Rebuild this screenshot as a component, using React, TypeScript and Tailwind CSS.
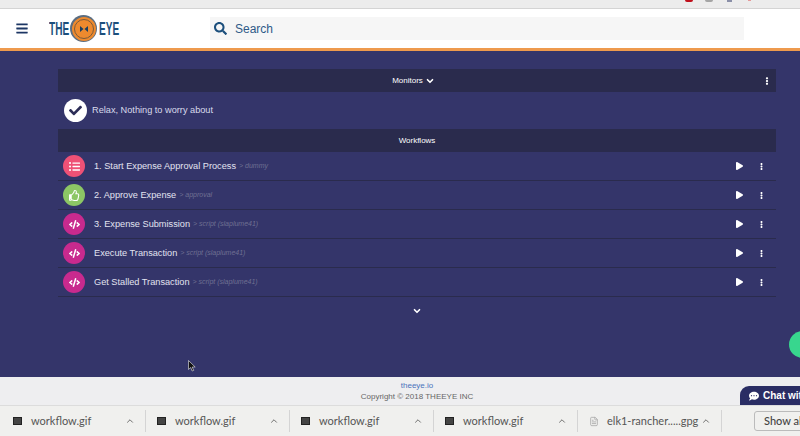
import { ChevronDown, ChevronUp, FileText } from "lucide-react";
import { FaBars, FaCheck, FaCode, FaCommentDots, FaEllipsisV, FaListUl, FaPlay, FaRegThumbsUp, FaSearch } from "react-icons/fa";

const workflows = [
  { name: "1. Start Expense Approval Process", meta: "> dummy", color: "bg-[#ee5176]", icon: "list" },
  { name: "2. Approve Expense", meta: "> approval", color: "bg-[#8cc665]", icon: "thumb" },
  { name: "3. Expense Submission", meta: "> script (slaplume41)", color: "bg-[#c82a8e]", icon: "code" },
  { name: "Execute Transaction", meta: "> script (slaplume41)", color: "bg-[#c82a8e]", icon: "code" },
  { name: "Get Stalled Transaction", meta: "> script (slaplume41)", color: "bg-[#c82a8e]", icon: "code" },
];

const downloads = ["workflow.gif", "workflow.gif", "workflow.gif", "workflow.gif"];

const WorkflowIcon = ({ icon }: { icon: string }) => {
  if (icon === "list") return <FaListUl className="h-[11px] w-[11px] text-white" />;
  if (icon === "thumb") return <FaRegThumbsUp className="h-[11px] w-[11px] text-white" />;
  return <FaCode className="h-[11px] w-[11px] text-white" />;
};

const Logo = () => (
  <div className="flex items-center text-[19px] font-bold leading-none text-[#1c4f7c]">
    <span className="inline-block w-[21px] origin-left scale-x-[0.53]">THE</span>
    <div className="flex h-[27px] w-[27px] items-center justify-center rounded-full bg-[#5b6d80]">
      <div className="flex h-[24px] w-[24px] items-center justify-center rounded-full bg-[#ee8a2e]">
        <div className="flex h-[20px] w-[20px] items-center justify-center rounded-full border border-[#7a5a3a]">
          <svg width="8" height="6" viewBox="0 0 8 6">
            <path d="M0 0l3.5 3L0 6zM8 0L4.5 3 8 6z" fill="#1c3f5f" />
          </svg>
        </div>
      </div>
    </div>
    <span className="ml-[2px] inline-block w-[20px] origin-left scale-x-[0.53]">EYE</span>
  </div>
);

const App = () => {
  return (
    <div className="relative flex h-[436px] w-[800px] flex-col overflow-hidden bg-[#34356a] font-['Liberation_Sans',sans-serif]">
      <div className="relative h-[9px] shrink-0 border-b border-[#d4d4d4] bg-[#ececec]">
        <span className="absolute left-[685px] top-0 h-[2px] w-[8px] rounded-b-full bg-[#c0101c]" />
        <span className="absolute left-[705px] top-0 h-[2px] w-[8px] rounded-b-full bg-[#a5a5a5]" />
        <span className="absolute left-[727px] top-0 h-[2px] w-[5px] bg-[#8a8fa8]" />
        <span className="absolute left-[748px] top-0 h-[1px] w-[3px] bg-[#e59a9a]" />
      </div>

      <header className="flex h-[42px] shrink-0 items-center border-b-[3px] border-[#ee9a4d] bg-white pl-[16px]">
        <FaBars className="h-[13px] w-[12px] text-[#1c3664]" />
        <div className="ml-[21px] w-[161px]">
          <Logo />
        </div>
        <div className="flex h-[23px] w-[534px] items-center bg-[#f6f6f6] pl-[4px]">
          <FaSearch className="h-[13px] w-[13px] text-[#1c4f7c]" />
          <span className="ml-[8px] text-[12px] text-[#2f5a88]">Search</span>
        </div>
      </header>

      <main className="flex-1 pl-[58px] pr-[24px] pt-[18px]">
        <div className="relative flex h-[23px] items-center justify-center bg-[#2a2b4d] pr-[7px] text-[8px] text-white">
          <span>Monitors</span>
          <ChevronDown className="ml-[2px] h-[10px] w-[10px]" strokeWidth={4} />
          <FaEllipsisV className="absolute right-[5px] h-[8px] w-[8px]" />
        </div>

        <div className="flex h-[37px] items-center pl-[6px]">
          <div className="flex h-[23px] w-[23px] items-center justify-center rounded-full bg-white">
            <FaCheck className="h-[13px] w-[13px] text-[#2c2d57]" />
          </div>
          <span className="ml-[5px] text-[9.2px] text-[#d9dbec]">Relax, Nothing to worry about</span>
        </div>

        <div className="flex h-[23px] items-center justify-center bg-[#2a2b4d] text-[8px] text-white">Workflows</div>

        {workflows.map((item) => (
          <div key={item.name} className="flex h-[29px] items-center border-b border-[#2a2b4d] pl-[5px]">
            <div className={`flex h-[22px] w-[22px] items-center justify-center rounded-full ${item.color}`}>
              <WorkflowIcon icon={item.icon} />
            </div>
            <span className="ml-[9px] mt-px text-[9.2px] text-[#e2e3f0]">{item.name}</span>
            <span className="ml-[3px] mt-px text-[7px] italic text-[#6f7092]">{item.meta}</span>
            <FaPlay className="ml-auto h-[8px] w-[7px] text-white" />
            <FaEllipsisV className="ml-[15px] mr-[11px] h-[7px] w-[7px] text-white" />
          </div>
        ))}

        <div className="flex justify-center pt-[9px]">
          <ChevronDown className="h-[10px] w-[10px] text-white" strokeWidth={4} />
        </div>
      </main>

      <footer className="flex h-[28px] shrink-0 flex-col items-center justify-center bg-[#eeeef0] pl-[34px] text-[8px] leading-[11px]">
        <span className="text-[#4a73bd]">theeye.io</span>
        <span className="text-[#666]">Copyright © 2018 THEEYE INC</span>
      </footer>

      <div className="flex h-[31px] shrink-0 items-center border-t border-[#dcdcdc] bg-[#f0f0ee] pl-[2px] font-['Lato',sans-serif] text-[11px] text-[#555]">
        {downloads.map((name, i) => (
          <div key={i} className="flex h-[22px] w-[144px] shrink-0 items-center border-r border-[#d4d4d4] pl-[11px] pr-[10px]">
            <span className="h-[8px] w-[9px] border border-[#222] bg-[#444]" />
            <span className="ml-[9px]">{name}</span>
            <ChevronUp className="ml-auto h-[10px] w-[10px]" />
          </div>
        ))}
        <div className="flex h-[22px] w-[144px] shrink-0 items-center border-r border-[#d4d4d4] pl-[11px] pr-[10px]">
          <FileText className="h-[11px] w-[10px] text-[#aaa]" />
          <span className="ml-[8px] whitespace-nowrap">elk1-rancher.....gpg</span>
          <ChevronUp className="ml-auto h-[10px] w-[10px] shrink-0" />
        </div>
        <div className="ml-[32px] flex h-[20px] w-[60px] shrink-0 items-center whitespace-nowrap rounded-[3px] border border-[#bbb] pl-[9px] font-medium text-[#444]">
          Show all
        </div>
      </div>

      <div className="absolute left-[789px] top-[331px] h-[27px] w-[27px] rounded-full bg-[#38d68e]" />
      <div className="absolute left-[740px] top-[386px] flex h-[19px] w-[70px] items-center rounded-t-[9px] bg-[#2a2d64] pl-[9px] text-[10px] font-bold whitespace-nowrap text-white">
        <FaCommentDots className="h-[10px] w-[10px]" />
        <span className="ml-[4px]">Chat with</span>
      </div>
      <svg className="absolute left-[188px] top-[360px]" width="8" height="12" viewBox="0 0 8 12">
        <path d="M0.5 0.5v9l2.2-2 1.5 3.5 1.5-.6-1.5-3.4h3z" fill="#111" stroke="#eee" strokeWidth="0.6" />
      </svg>
    </div>
  );
};

export default App;
